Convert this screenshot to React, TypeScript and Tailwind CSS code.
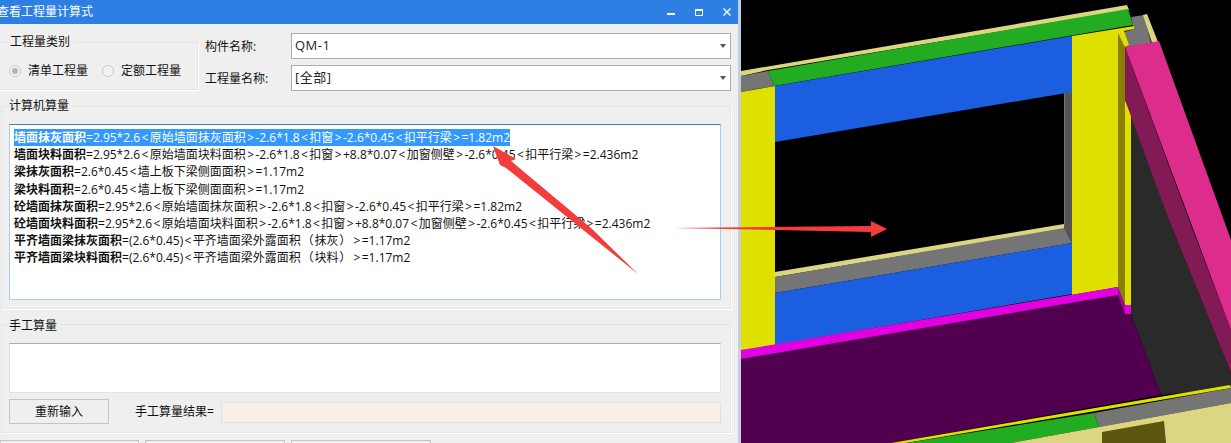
const FONT = '"Open Sans", "Noto Sans CJK SC", sans-serif';

const LINES: { name: string; rest: string; selected?: boolean }[] = [
  { name: '墙面抹灰面积', rest: '=2.95*2.6<原始墙面抹灰面积>-2.6*1.8<扣窗>-2.6*0.45<扣平行梁>=1.82m2', selected: true },
  { name: '墙面块料面积', rest: '=2.95*2.6<原始墙面块料面积>-2.6*1.8<扣窗>+8.8*0.07<加窗侧壁>-2.6*0.45<扣平行梁>=2.436m2' },
  { name: '梁抹灰面积', rest: '=2.6*0.45<墙上板下梁侧面面积>=1.17m2' },
  { name: '梁块料面积', rest: '=2.6*0.45<墙上板下梁侧面面积>=1.17m2' },
  { name: '砼墙面抹灰面积', rest: '=2.95*2.6<原始墙面抹灰面积>-2.6*1.8<扣窗>-2.6*0.45<扣平行梁>=1.82m2' },
  { name: '砼墙面块料面积', rest: '=2.95*2.6<原始墙面块料面积>-2.6*1.8<扣窗>+8.8*0.07<加窗侧壁>-2.6*0.45<扣平行梁>=2.436m2' },
  { name: '平齐墙面梁抹灰面积', rest: '=(2.6*0.45)<平齐墙面梁外露面积（抹灰）>=1.17m2' },
  { name: '平齐墙面梁块料面积', rest: '=(2.6*0.45)<平齐墙面梁外露面积（块料）>=1.17m2' },
];

function GroupBox({
  label,
  className,
  legendClass = '',
  children,
}: {
  label: string;
  className: string;
  legendClass?: string;
  children: React.ReactNode;
}) {
  return (
    <fieldset className={`border border-[#e4e4e4] shadow-[1px_1px_0_#fff] ${className}`}>
      <legend className={`h-4 bg-[#efefef] pr-1 text-xs leading-4 text-[#111] ${legendClass}`}>{label}</legend>
      {children}
    </fieldset>
  );
}

function Radio({ label, checked }: { label: string; checked?: boolean }) {
  return (
    <div className="flex items-center gap-[7px]">
      <span className="flex h-[12px] w-[12px] items-center justify-center rounded-full border border-[#c8c8c8] bg-[#f2f2f2]">
        {checked && <span className="h-[6px] w-[6px] rounded-full bg-[#b4b4b4]" />}
      </span>
      <span className="text-xs leading-4 text-[#111]">{label}</span>
    </div>
  );
}

function Select({ value }: { value: string }) {
  return (
    <div className="flex h-[26px] flex-1 items-center justify-between border border-[#adadad] bg-white px-[3px] text-[13px] tracking-[0.5px] text-[#222]">
      <span>{value}</span>
      <svg width="6" height="4" viewBox="0 0 6 4" className="mr-[1px]">
        <path d="M0 0H6L3 4Z" fill="#555" />
      </svg>
    </div>
  );
}

function Scene() {
  return (
    <svg width="490" height="443" viewBox="0 0 490 443" className="shrink-0 bg-black">
      {/* back corner */}
      <polygon points="390,17 403,15 410,43 385,47 383,32 393,29" fill="#757575" />
      <polygon points="402,15 406,14 417,42 411,43" fill="#dcd683" />
      {/* dark side wall */}
      <polygon points="390,110 428,220 490,373 490,388 420,395 390,314" fill="#2a2a2a" />
      {/* floor */}
      <polygon points="0,359 377,295 384,314 390,314 420,395 150,443 0,443" fill="#50004f" />
      {/* top of wall */}
      <polygon points="0,71 386,5 388,10 27,70 0,76" fill="#dcd683" />
      <polygon points="0,76 27,71 33,86 0,92" fill="#757575" />
      <polygon points="27,71 387,9 392,25 33,86" fill="#22ac22" />
      {/* window reveal */}
      <polygon points="323,90 331,90 331,243 323,228" fill="#555" />
      <rect x="323" y="90" width="1" height="135" fill="#7b7750" />
      <polygon points="34,272 323,224 323,229 34,277" fill="#dcd683" />
      <polygon points="34,277 323,228 331,243 34,293" fill="#757575" />
      {/* beams */}
      <polygon points="34,86 331,36 331,92 34,142" fill="#1b5fe0" />
      <polygon points="34,293 331,243 331,294 34,345" fill="#1b5fe0" />
      {/* columns */}
      <polygon points="0,92 34,86 34,345 0,351" fill="#e0e000" />
      <polygon points="331,36 393,26 393,29 383,31 388,45 384,47 384,100 390,112 390,305 384,305 377,287 331,295" fill="#e0e000" />
      <polygon points="377,33 384,47 384,305 377,287" fill="#8a8000" />
      {/* magenta skirting */}
      <polygon points="0,350 377,287 377,295 0,359" fill="#e000e0" />
      <polygon points="377,287 384,305 384,314 377,295" fill="#a800a8" />
      <rect x="384" y="305" width="6" height="9" fill="#e000e0" />
      {/* pink wall */}
      <polygon points="384,47 448,220 490,330 490,373 428,220 384,100" fill="#821a55" />
      <polygon points="384,47 418,41 490,240 490,330" fill="#dc2c8c" />
      {/* near wall */}
      <polygon points="150,443 489,385 490,388 165,443" fill="#e0e000" />
      <polygon points="353,413 490,388 490,403 358,427" fill="#757575" />
      <polygon points="165,443 353,413 358,427 270,443" fill="#22ac22" />
      <polygon points="270,443 358,427 490,403 490,443" fill="#dcd683" />
      <polygon points="361,432 423,421 425,443 361,443" fill="#5c5510" />
    </svg>
  );
}

export default function App() {
  return (
    <div className="relative flex h-[443px] w-[1231px] overflow-hidden bg-black" style={{ fontFamily: FONT }}>
      {/* dialog */}
      <div className="flex w-[741px] shrink-0 flex-col overflow-hidden border-r-[3px] border-[#c5cde0] bg-[#efefef]">
        <div className="flex h-[24px] shrink-0 items-center justify-between overflow-hidden bg-[#2d7fe3]">
          <span className="-ml-[3px] whitespace-nowrap text-xs text-white">查看工程量计算式</span>
          <div className="mr-[7px] flex items-center gap-[20px]">
            <svg width="8" height="8" viewBox="0 0 8 8"><rect y="5" width="8" height="2" fill="#fff" /></svg>
            <svg width="8" height="7" viewBox="0 0 8 7"><path d="M.5 1.5h7v5h-7z" fill="none" stroke="#fff" /><rect width="8" height="2" fill="#fff" /></svg>
            <svg width="8" height="8" viewBox="0 0 8 8"><path d="M.5.5l7 7M7.5.5l-7 7" stroke="#fff" strokeWidth="1.4" /></svg>
          </div>
        </div>

        {/* top row */}
        <div className="flex h-[68px] shrink-0 pr-[7px]">
          <GroupBox label="工程量类别" className="-ml-px mt-[10px] h-[56px] w-[199px] shrink-0 pl-[10px]">
            <div className="-ml-px flex items-center gap-[14px] pt-[13px]">
              <Radio label="清单工程量" checked />
              <Radio label="定额工程量" />
            </div>
          </GroupBox>
          <div className="ml-[7px] flex flex-1 flex-col gap-[6px] pt-[9px]">
            <div className="flex items-center">
              <span className="w-[86px] pt-[2px] text-xs text-[#111]">构件名称:</span>
              <Select value="QM-1" />
            </div>
            <div className="flex items-center">
              <span className="w-[86px] pt-[2px] text-xs text-[#111]">工程量名称:</span>
              <Select value="[全部]" />
            </div>
          </div>
        </div>

        {/* computed */}
        <GroupBox label="计算机算量" className="ml-px mr-[7px] mt-[6px] h-[211px] shrink-0 pl-[7px] pr-[9px] pt-[10px]">
          <div className="h-[176px] border border-[#a8d0ec] border-t-[#3a7fc0] bg-white pl-[4px] pt-[4px]">
            {LINES.map((l) => (
              <div key={l.name} className="h-[17.2px] whitespace-nowrap text-xs leading-[17px] text-[#111]">
                <span className={l.selected ? 'inline-block bg-[#3399ff] text-white' : 'inline-block'}>
                  <b className="font-bold">{l.name}</b>
                  {l.rest.split(/([<>（）])/).map((part, i) =>
                    part === '<' || part === '>' ? (
                      <span key={i} className="px-[1.4px]">{part}</span>
                    ) : part === '（' || part === '）' ? (
                      <span key={i} className="px-[0.8px]">{part}</span>
                    ) : (
                      part
                    ),
                  )}
                </span>
              </div>
            ))}
          </div>
        </GroupBox>

        {/* manual */}
        <GroupBox
          label="手工算量"
          legendClass="translate-y-[2px]"
          className="ml-px mr-[7px] mt-[7px] h-[117px] shrink-0 pl-[7px] pr-[9px] pt-[11px]"
        >
          <div className="h-[50px] border border-[#e0e4e8] border-t-[#adadad] bg-white" />
          <div className="mt-[6px] flex items-center">
            <button className="h-[25px] w-[100px] border border-[#c4c4c4] text-xs text-[#111]">重新输入</button>
            <span className="ml-[26px] w-[86px] whitespace-nowrap text-xs text-[#111]">手工算量结果=</span>
            <div className="mt-[1px] h-[21px] flex-1 border border-[#e0e0e0] bg-[#f9efe6]" />
          </div>
        </GroupBox>

        {/* bottom buttons, cut off by the crop */}
        <div className="mt-[7px] flex gap-[6px]">
          <div className="h-[10px] w-[139px] border border-[#c4c4c4]" />
          <div className="h-[10px] w-[140px] border border-[#c4c4c4]" />
          <div className="h-[10px] w-[140px] border border-[#c4c4c4]" />
        </div>
      </div>

      <Scene />

      {/* red annotation arrows drawn over the screenshot */}
      <svg width="1231" height="443" viewBox="0 0 1231 443" className="pointer-events-none absolute left-0 top-0">
        <polygon points="493,146 516,159 511,161 591,228 638,274 506,168 500,165" fill="#f33c3c" />
        <polygon points="673,228 871,226 871,221 887,229 871,237 871,232" fill="#f33c3c" />
      </svg>
    </div>
  );
}
